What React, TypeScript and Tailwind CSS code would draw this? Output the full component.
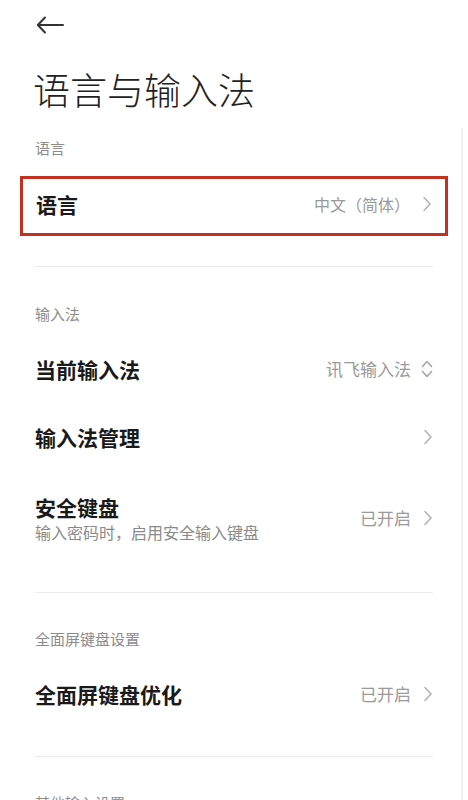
import React from "react";

const Chevron = () => (
  <svg width="10" height="16" viewBox="0 0 10 16" className="ml-[12px] shrink-0">
    <path d="M2 1.5 L8 8 L2 14.5" fill="none" stroke="#b3b3b3" strokeWidth="1.6" strokeLinecap="round" strokeLinejoin="round" />
  </svg>
);

const UpDown = () => (
  <svg width="12" height="20" viewBox="0 0 12 20" className="ml-[10px] shrink-0">
    <path d="M1.5 7.5 L6 2.5 L10.5 7.5 M1.5 12.5 L6 17.5 L10.5 12.5" fill="none" stroke="#a6a6a6" strokeWidth="1.6" strokeLinecap="round" strokeLinejoin="round" />
  </svg>
);

const Label = ({ text, className = "" }: { text: string; className?: string }) => (
  <div className={`text-[15px] leading-[18px] text-[#8c8c8c] ${className}`}>{text}</div>
);

const Row = ({ title, sub, value, valueSize = "text-[17px]", icon = "chevron", className = "" }: { title: string; sub?: string; value?: string; valueSize?: string; icon?: "chevron" | "updown"; className?: string }) => (
  <div className={`flex items-center justify-between pb-[4px] ${className}`}>
    <div className="flex flex-col">
      <span className="text-[21px] leading-[26px] font-semibold text-[#1a1a1a]">{title}</span>
      {sub && <span className="text-[16px] leading-[22px] text-[#8a8a8a] mt-[1px]">{sub}</span>}
    </div>
    <div className="flex items-center">
      {value && <span className={`${valueSize} text-[#9a9a9a]`}>{value}</span>}
      {icon === "chevron" ? <Chevron /> : <UpDown />}
    </div>
  </div>
);

const Divider = () => <div className="h-px bg-[#ececec]" />;

export default function App() {
  return (
    <div className="w-[468px] h-[800px] overflow-hidden bg-white flex" style={{ fontFamily: '"Noto Sans CJK SC", "Noto Sans", sans-serif' }}>
      <div className="flex-1 pl-[35px] pr-[28px]">
        <div className="h-[50px] flex items-center">
          <svg width="28" height="20" viewBox="0 0 28 20" className="ml-[1px]">
            <path d="M27 10 H2 M9 2.5 L1.8 10 L9 17.5" fill="none" stroke="#333" strokeWidth="2" strokeLinecap="round" strokeLinejoin="round" />
          </svg>
        </div>
        <div className="mt-[19px] -ml-[2px] text-[37px] leading-[40px] font-light text-[#222]">语言与输入法</div>

        <Label text="语言" className="mt-[30px]" />
        <div className="mt-[19px] -mx-[15px] h-[60px] border-[3px] border-[#c4311f] px-[13px] flex flex-col justify-center">
          <Row title="语言" value="中文（简体）" valueSize="text-[16px]" />
        </div>
        <div className="mt-[30px]"><Divider /></div>

        <Label text="输入法" className="mt-[38px]" />
        <Row title="当前输入法" value="讯飞输入法" icon="updown" className="mt-[14px] h-[68px]" />
        <Row title="输入法管理" className="h-[68px]" />
        <Row title="安全键盘" sub="输入密码时，启用安全输入键盘" value="已开启" className="h-[94px]" />
        <div className="mt-[25px]"><Divider /></div>

        <Label text="全面屏键盘设置" className="mt-[37px]" />
        <Row title="全面屏键盘优化" value="已开启" className="mt-[14px] h-[68px]" />
        <div className="mt-[26px]"><Divider /></div>

        <Label text="其他输入设置" className="mt-[37px]" />
      </div>
      <div className="w-[2px] mt-[128px] bg-[#f1f1f1]" />
      <div className="w-[5px]" />
    </div>
  );
}
